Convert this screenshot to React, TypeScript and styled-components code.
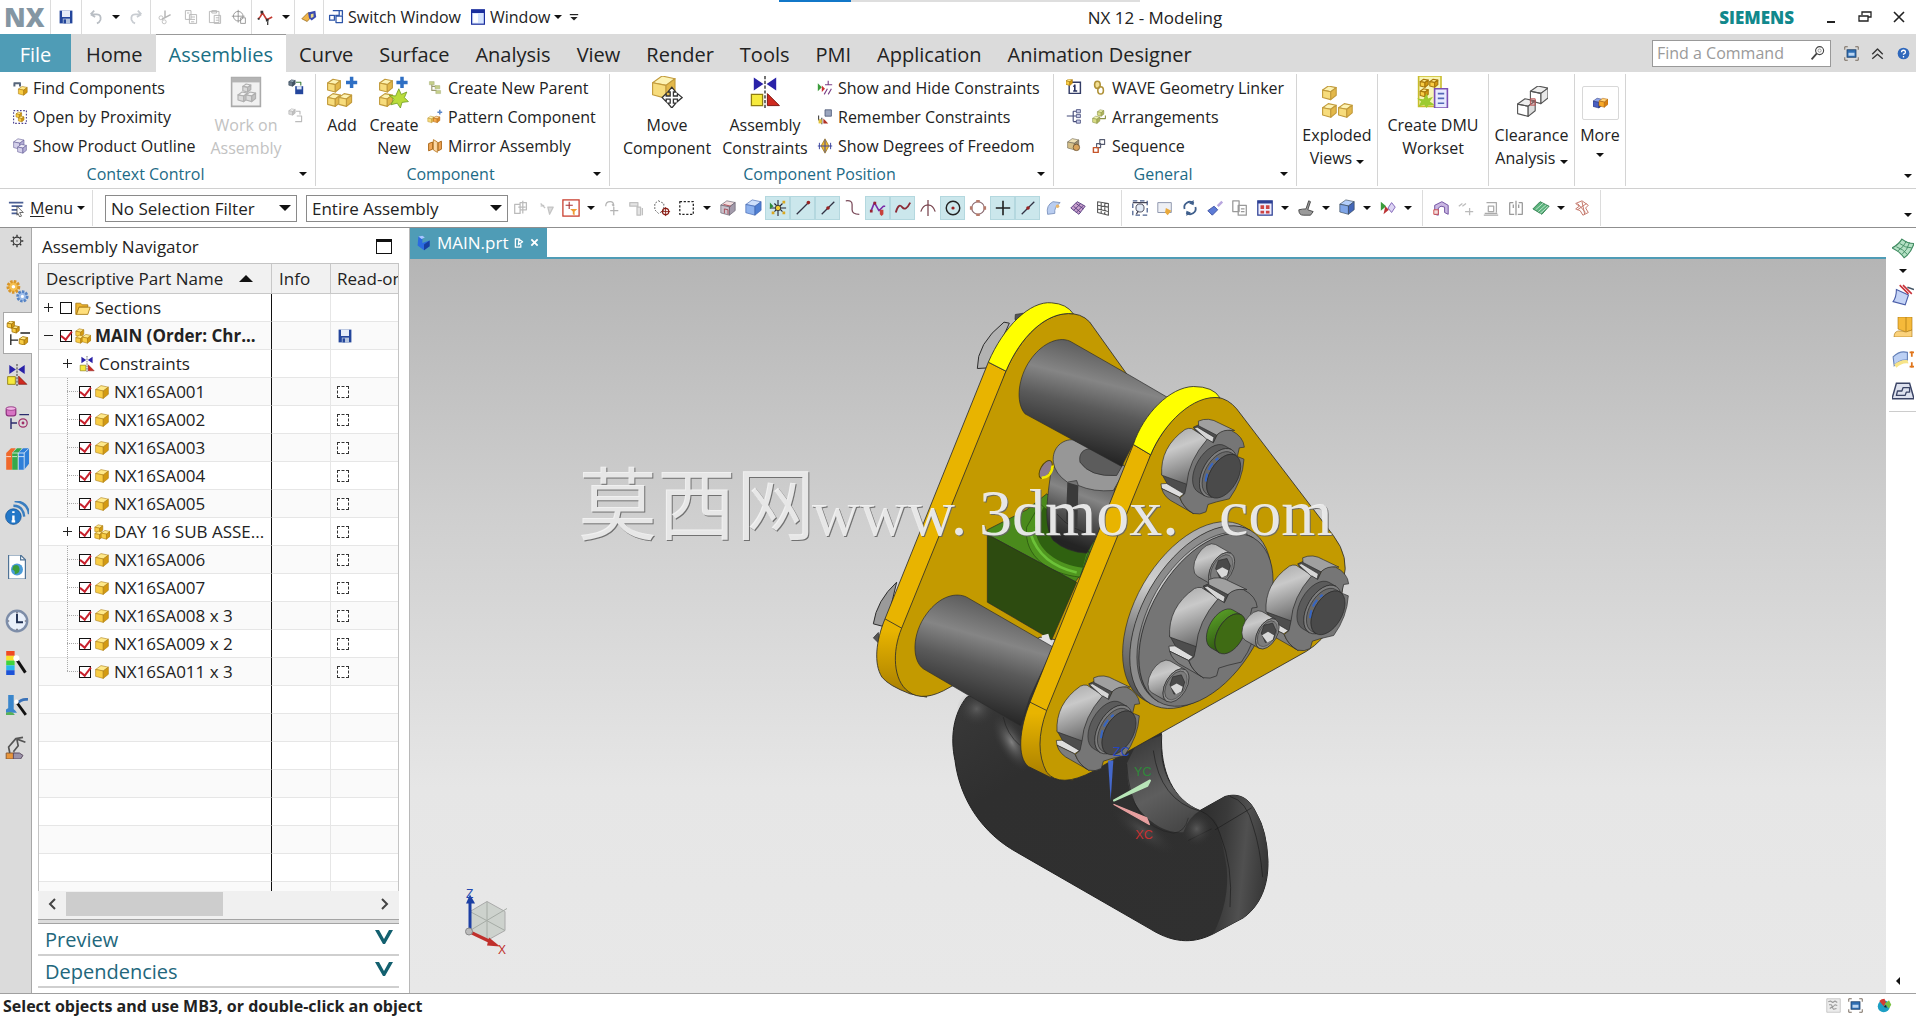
import React from "react";
import styled, { createGlobalStyle, css } from "styled-components";

const Global = createGlobalStyle`
  * { box-sizing: border-box; }
  body { margin: 0; background: #fff; overflow: hidden; }
  body, button, input, select { font-family: "Open Sans", "Noto Sans", "Noto Sans CJK SC", sans-serif; font-size: 16px; color: #222; }
  button { background: none; border: 0; padding: 0; cursor: default; white-space: nowrap; }
  svg { display: block; flex: none; }
`;

/* ---------- icon primitives ---------- */

type Tone = [string, string, string, string];
const GOLD: Tone = ["#ffe98a", "#f8cd45", "#d39a12", "#a8780c"];
const PALE: Tone = ["#fdf3b4", "#f7dc7c", "#e3b84a", "#c29b3c"];
const BLUE: Tone = ["#cfe0fb", "#8db2ee", "#4f7fd2", "#3c62ad"];
const NAVY: Tone = ["#8fa4e8", "#4a5fc0", "#2b3a94", "#222f78"];
const GREY: Tone = ["#f2f2f2", "#dadada", "#c2c2c2", "#b0b0b0"];
const STONE: Tone = ["#e6e2e2", "#bdb9c6", "#8d8798", "#5d5866"];

const Box = ({ x, y, s, t = GOLD }: { x: number; y: number; s: number; t?: Tone }) => {
  const p = (...n: number[]) => n.map((v, i) => (i % 2 ? y : x) + v * s).join(" ");
  return (
    <g stroke={t[3]} strokeWidth=".7" strokeLinejoin="round">
      <polygon points={p(0, 0.3, 0.42, 0, 1, 0.12, 0.6, 0.42)} fill={t[0]} />
      <polygon points={p(0, 0.3, 0.6, 0.42, 0.6, 1, 0, 0.84)} fill={t[1]} />
      <polygon points={p(0.6, 0.42, 1, 0.12, 1, 0.68, 0.6, 1)} fill={t[2]} />
    </g>
  );
};

const Line = ({ d, c = "#444", w = 1.4, f = "none", dash }: { d: string; c?: string; w?: number; f?: string; dash?: string }) => (
  <path d={d} stroke={c} strokeWidth={w} fill={f} strokeDasharray={dash} strokeLinejoin="round" />
);

const Plus = ({ x, y, s, c = "#2f6fc4" }: { x: number; y: number; s: number; c?: string }) => (
  <path d={`M${x} ${y - s}v${2 * s}M${x - s} ${y}h${2 * s}`} stroke={c} strokeWidth={s / 1.6} />
);

const Bowtie = () => (
  <>
    <path d="M3 1l6 4-6 4zM17 1l-6 4 6 4z" fill="#2a22a8" />
    <path d="M1.500 11.500h7v7h-7z" fill="#f6ea3c" stroke="#8f7d10" strokeWidth=".8" />
    <path d="M11.500 18.500v-7.500l7.500 7.500z" fill="#cf2a20" stroke="#7d1510" strokeWidth=".6" />
    <Line d="M10 0v20" c="#222" w={0.8} dash="2 1" />
  </>
);

const Monitor = () => (
  <>
    <rect x="4" y="5" width="12" height="10" fill="#2f6fb4" stroke="#1c3b63" />
    <rect x="6" y="9" width="8" height="4" fill="#bcd6f2" />
    <Line d="M1 5V1h4M15 1h4v4M19 15v4h-4M5 19H1v-4" c="#6b5d50" w={1.2} />
  </>
);

const ICONS: Record<string, React.ReactNode> = {
  save: (<><path d="M2 2h16v16H2z" fill="#24469c" /><path d="M5 2h10v8H5z" fill="#e6edf8" /><path d="M6 12h9v6H6z" fill="#b4c4de" /><path d="M7 13h3v5H7z" fill="#24469c" /></>),
  undo: <Line d="M4 7l4-4M4 7l5 3M4 7h7q5 0 4 6-1 3-4 4" c="#b9bec4" w={2} />,
  redo: <Line d="M16 7l-4-4M16 7l-5 3M16 7H9Q4 7 5 13q1 3 4 4" c="#c9cdd2" w={2} />,
  cut: (<><Line d="M10 2v9M17 7L6 13" c="#b5b5b5" w={1.800} /><circle cx="5" cy="11" r="2.500" stroke="#b5b5b5" fill="none" /><circle cx="9" cy="16" r="2.500" stroke="#b5b5b5" fill="none" /></>),
  copy: <Line d="M3 2h7v11H3zM8 7h9v11H8zM10 10h5M10 13h5M10 16h4M5 5h3" c="#b8b8b8" f="#fff" w={1.200} />,
  paste: <Line d="M3 3h12v14H3zM6 2h6v3H6zM9 8h8v10H9zM11 11h4M11 14h4" c="#b8b8b8" f="#fff" w={1.200} />,
  target: (<><circle cx="9" cy="9" r="6" stroke="#888" fill="none" /><Line d="M9 1v16M1 9h16M12 11h6v7h-6z" c="#888" w={1} /></>),
  route: (<><Line d="M2 12Q5 11 7 5l5 8 6-3" c="#c23b32" w={1.800} /><path d="M5 3h3v3H5zM11 12h3v3h-3zM2 11h2v2H2z" fill="#333" /><Line d="M13 15v4" c="#333" /></>),
  hand: (<><path d="M2 12l7-7 5 3-6 7z" fill="#f0b54a" stroke="#8f6419" strokeWidth=".8" /><path d="M9 5l8-2 1 7-5 4-3-3z" fill="#3a4bb0" /><path d="M12 7l3-1v4l-3 1z" fill="#e8d98a" /></>),
  windows: <Line d="M2 8h6v6H2zM6 2h8v6H9M10 9h8v8h-8zM14 2h4v6" c="#2d55a8" w={1.600} />,
  window: (<><rect x="2" y="1" width="16" height="18" fill="#d5e4ff" stroke="#1b2f9e" strokeWidth="1.500" /><path d="M2 1h16v4H2z" fill="#1b2f9e" /><path d="M4 6h6v11H4z" fill="#fff" /></>),
  overflow: (<><Line d="M3 6h14" c="#222" w={2} /><path d="M4 10h12l-6 6z" fill="#222" /></>),
  find: (<><Box x={8} y={8} s={11} /><Line d="M2 4h9M3 4v4M10 4v4" c="#56657a" w={2.500} /></>),
  proximity: (<><Line d="M2 2h16v16H2z" c="#4a3f8e" dash="2 2" /><Box x={5} y={4} s={7} /><Box x={8} y={9} s={7} /></>),
  outline: (<><Box x={2} y={1} s={13} t={["#eceaf6", "#d4d0ea", "#b4afd6", "#5b5490"]} /><Box x={7} y={8} s={11} t={["#eceaf6", "#d4d0ea", "#b4afd6", "#5b5490"]} /></>),
  workon: (<><path d="M1 1h18v18H1z" fill="#f1f1f1" stroke="#aaa" /><path d="M1 1h18v3H1z" fill="#b4b4b4" /><Box x={5} y={10} s={6} t={GREY} /><Box x={10} y={10} s={6} t={GREY} /><Box x={8} y={5} s={5} t={GREY} /></>),
  saveCtx: (<><path d="M9 9h10v10H9z" fill="#24469c" /><path d="M11 9h6v4h-6z" fill="#dfe8f8" /><Box x={1} y={1} s={8} t={["#9ab", "#678", "#456", "#345"]} /><Line d="M10 4h6v4" c="#3f7d3f" /></>),
  saveCtxOff: (<><Box x={1} y={1} s={8} t={GREY} /><Line d="M10 4h5v4M11 10h6v7H9" c="#bbb" /></>),
  add: (<><Box x={1} y={2} s={8} t={PALE} /><Box x={1} y={11} s={8} t={PALE} /><Box x={8} y={11} s={8} t={PALE} /><Plus x={16} y={4} s={3.500} /></>),
  create: (<><Box x={1} y={2} s={8} t={PALE} /><Box x={1} y={11} s={8} t={PALE} /><path d="M13 8l1.500 3.500L18 10l-1.500 3.500L19 16l-4 .5L14 20l-2-3-4 1 2-3.500L7 12l4 .5z" fill="#b9dc3c" stroke="#6f9a20" strokeWidth=".5" /><Plus x={15} y={4} s={3.500} /></>),
  parent: (<><Line d="M6 4v9h6M6 8h6" c="#9a9a70" /><path d="M3 2h6v4H3zM10 7h6v4h-6zM11 13h6v4h-6z" fill="#c5cf8a" stroke="#9aa468" strokeWidth=".5" /></>),
  pattern: (<><Box x={1} y={9} s={8} t={PALE} /><Box x={8} y={9} s={8} t={["#ffd9a0", "#f5a94d", "#d98422", "#b66a14"]} /><Plus x={16} y={4} s={3} c="#5a86c8" /></>),
  mirror: (<><path d="M8 2l5 3v13l-5-3z" fill="#fbd9a8" stroke="#b8741c" /><Line d="M2 7l5-2v9l-5 2zM14 6l4-2v10l-4 2z" c="#a86414" w={1.200} f="#f2a95a" /></>),
  move: (<><Box x={1} y={0} s={14} t={PALE} /><path d="M13 7l2.500 3h-1.500v2.500h2.500V11l3 2.500-3 2.500v-1.500H14V17h1.500L13 20l-2.500-3H12v-2.500H9.500V16L7 13.500 9.500 11v1.500H12V10h-1.500z" fill="#fff" stroke="#333" strokeWidth=".8" /></>),
  constraints: <Bowtie />,
  showhide: (<><path d="M1 4l5 5-5 5z" fill="#3b9c3b" /><path d="M6 7l4 4-4 4z" fill="#c33" /><Line d="M10 6h9M14 1v5M9 18l4-7M14 18l4-7" c="#7b3f86" /></>),
  remember: (<><path d="M10 1h8v8h-8z" fill="#9aa5bd" stroke="#4a5775" /><Line d="M2 8v6M2 14h4M6 11v8" c="#444" /><path d="M2 13h4v5H2z" fill="#e2c23a" /><path d="M8 18v-6l6 6z" fill="#b03024" /></>),
  dof: (<><path d="M10 1l5 9-5 9-5-9z" fill="#f0b92c" stroke="#8f6810" strokeWidth=".8" /><Line d="M1 10h18M10 2v16M3 6v8M17 6v8" c="#3c46a0" w={1.200} /></>),
  info: (<><path d="M4 4h14v14H4z" fill="#fff" stroke="#333c66" strokeWidth="1.800" /><Line d="M11 7v8M9 15h5M9 9h2" c="#26305e" w={2} /><Box x={0} y={0} s={8} t={GOLD} /></>),
  linker: (<><ellipse cx="8" cy="6" rx="3.500" ry="4.500" stroke="#b09238" strokeWidth="2" fill="#f3df92" /><ellipse cx="12" cy="13" rx="3.500" ry="4.500" stroke="#b09238" strokeWidth="2" fill="none" /></>),
  tree: (<><Line d="M1 10h8M9 4v13M9 4h4M9 10h4M9 17h4" c="#434a78" /><path d="M13 2h5v4h-5zM13 8h5v4h-5zM13 15h5v4h-5z" fill="#c8cce8" stroke="#434a78" /></>),
  arrange: (<><Box x={8} y={1} s={8} t={["#f1f3b0", "#d8dc84", "#aeb45a", "#8b9148"]} /><Box x={2} y={9} s={9} t={["#f1f3b0", "#d8dc84", "#aeb45a", "#8b9148"]} /><Line d="M11 12h7v-4" c="#8b9148" /></>),
  part: (<><Box x={2} y={2} s={14} t={["#efe1b6", "#d5bf88", "#9c8d70", "#66604e"]} /><circle cx="13" cy="13" r="4" fill="#d9a35a" stroke="#6a5030" /></>),
  sequence: (<><Line d="M11 2h6v6h-6z" c="#555b70" /><Line d="M7 7h5v5H7z" c="#555b70" /><Line d="M3 12h6v6H3z" c="#c6552a" w={1.800} /></>),
  exploded: (<><Box x={1} y={0} s={8.500} t={PALE} /><Box x={1} y={11} s={8.500} t={PALE} /><Box x={11} y={11} s={8.500} t={PALE} /></>),
  dmu: (<><path d="M1 0h14v19H1z" fill="#f8f5b6" stroke="#c9bd2e" /><Box x={2} y={2} s={5} /><Box x={8} y={2} s={5} /><Box x={2} y={8} s={5} /><path d="M11 8h8v12h-8z" fill="#e8eaff" stroke="#7a4fb4" /><Line d="M13 11h4M13 14h4M13 17h4" c="#5468b8" w={1} /><path d="M6 11l1 3 3-1-2 3 3 2-4 .5L6 20l-1.500-2L1 19l1.500-3L0 14l4 .5z" fill="#9ccb2f" /></>),
  clearance: (<><Box x={1} y={8} s={11} t={["#eee", "none", "#ddd", "#555"]} /><Box x={9} y={0} s={11} t={["#eee", "none", "#e9e9e9", "#555"]} /><path d="M9 8h3v4H9z" fill="#d2747455" stroke="#b55" strokeWidth=".6" /></>),
  more: (<><Box x={0} y={3} s={13} t={NAVY} /><Box x={8} y={3} s={12} t={["#ffd27a", "#f7a928", "#d97f10", "#b0650b"]} /></>),
  menu: (<><Line d="M1 4h16M4 8h12M4 12h8M4 16h6" c="#4b5f94" w={2} /><path d="M10 8l7 7h-4l2 4-2 1-2-4-1 2z" fill="#fff" stroke="#333" strokeWidth=".8" /></>),
  ghost1: <Line d="M3 6h6v10H3zM9 4h7v8H9zM7 9h8M12 2v14" c="#bbb" />,
  ghost2: <Line d="M4 5l5 5M4 8l4-1M12 9h6l-4 8z" c="#c4c4c4" f="#ddd" />,
  filter: (<><rect x="1" y="1" width="18" height="18" fill="#fff" stroke="#c83a2a" strokeWidth="1.400" /><path d="M4 7h8M8 3v8" stroke="#a33" strokeWidth="1.200" /><path d="M9 11h8l-3 3v4l-2-1v-3z" fill="#ef9b33" /></>),
  ghost3: <Line d="M3 8q0-5 5-5 4 0 4 5M12 8l-2-2M8 13h9M12 9v9" c="#b4b4b4" />,
  ghost4: <Line d="M2 4h9v4H2zM10 9h4v9h-4zM16 10v8" c="#c0c0c0" f="#e4e4e4" />,
  snapset: (<><path d="M6 2l6 3v8l-6 3-4-4V5z" stroke="#555" strokeDasharray="2 1.500" /><circle cx="14" cy="14" r="3.500" stroke="#8a1d14" strokeWidth="1.400" /><path d="M14 9v10M9 14h10" stroke="#8a1d14" /></>),
  marquee: <Line d="M2 3h15v14H2z" c="#222" dash="2.500 1.800" />,
  house: (<><Box x={2} y={2} s={16} t={["#f3dfe0", "#c9c2cc", "#a39bab", "#5d5866"]} /><Line d="M6 16v-5l4 1v5M5 6l8 2" c="#a8444f" w={1} /></>),
  shade: <Box x={2} y={1} s={17} t={BLUE} />,
  snap: (<><path d="M6 5l9 9M15 5l-9 9M10 1v18M1 10h18" stroke="#223" strokeWidth="1.200" /><circle cx="10" cy="10" r="3" fill="#f0c930" stroke="#333" /><path d="M1 4l4 4-4 3z" fill="#2d8a3c" /><path d="M15 2h3v3h-3zM15 14h3v3h-3zM3 14h3v3H3z" fill="#d9a820" /></>),
  endpt: (<><Line d="M3 17L17 3" c="#334" /><circle cx="16" cy="4" r="2" fill="#922" /></>),
  midpt: (<><Line d="M3 17L17 3" c="#334" /><circle cx="10" cy="10" r="2" fill="#922" /></>),
  tangent: <Line d="M2 2q7-1 7 4v6q0 5 8 5" c="#7a4a5a" />,
  spline: (<><Line d="M2 14L6 4l5 9 5-5 2 0" c="#7b2ba8" w={1.800} /><path d="M12 12h4v5l-2 2-2-2z" fill="#c8413a" /><path d="M1 12h3v3H1zM5 3h3v3H5z" fill="#923" /></>),
  curve: <Line d="M2 15Q5 4 9 9t9-5" c="#8c2a35" w={2} />,
  inter: <Line d="M10 1v18M2 14Q5 6 10 7q5-1 8 7" c="#7a4650" />,
  center: (<><circle cx="10" cy="10" r="7.500" stroke="#222" strokeWidth="1.600" /><circle cx="10" cy="10" r="1.800" fill="#922" /></>),
  quad: (<><circle cx="10" cy="10" r="7" stroke="#8a6a70" strokeWidth="1.200" /><path d="M8 1h4v3H8zM8 16h4v3H8zM1 8h3v4H1zM16 8h3v4h-3z" fill="#b67a6a" /></>),
  point: <Line d="M10 2v16M2 10h16" c="#222" w={1.800} />,
  onface: (<><path d="M4 17Q2 7 10 3l8 1q-7 5-6 12z" fill="#b9cdf0" stroke="#7d93bd" /><circle cx="15" cy="8" r="2" fill="#e8b56a" /></>),
  mesh: (<><path d="M2 10l7-7 9 5-7 9z" fill="#c9a0cc" stroke="#543b7e" /><Line d="M5 8l8 7M8 5l8 6M5 13l8-8M8 15l8-8" c="#543b7e" w={1} /></>),
  grid: <Line d="M4 3l12 2v13L4 15zM8 4v12M12 4v13M4 7l12 2M4 11l12 3" c="#555" w={1.200} />,
  fit: (<><Line d="M2 2h16v16H2z" c="#4a5f8c" dash="5 3" /><circle cx="10" cy="10" r="4.500" fill="#e3ebf6" stroke="#445" /><Line d="M2 4h16M6 17l2-4" c="#445" /></>),
  note: (<><path d="M2 4h15v11H2z" fill="#eef0f5" stroke="#8790a8" /><path d="M11 10l6 3-4 5-3-3z" fill="#e9a93c" /></>),
  rotate: (<><path d="M4 11a6 6 0 0 1 10-6M16 9a6 6 0 0 1-10 6" stroke="#3f5f8c" strokeWidth="2" /><path d="M14 1v6l-5-2zM6 19v-6l5 2z" fill="#3f5f8c" /></>),
  brush: (<><path d="M2 13l7-5 4 4-6 6z" fill="#5d7bd6" stroke="#3a4fa0" /><path d="M12 7l5-5 2 2-5 5z" fill="#b9a7df" /></>),
  pages: <Line d="M2 2h7v12H2zM8 7h9v11H8zM11 11h4M11 14h4" c="#999" />,
  layout: (<><path d="M2 2h16v16H2z" fill="#eef" stroke="#2c3f94" strokeWidth="1.400" /><path d="M2 2h16v3H2z" fill="#2c3f94" /><path d="M5 7h4v4H5zM11 7h4v4h-4zM5 13h4v3H5zM11 13h4v3h-4z" fill="#c44" /></>),
  section: (<><path d="M2 12q4-1 8-1l3-9 2 1-3 9 6 2-3 4H7q-5 0-5-6z" fill="#9a9a9a" stroke="#444" /></>),
  blue: <Box x={2} y={1} s={16} t={["#b4cffb", "#7fa6e8", "#4366b8", "#345"]} />,
  clip: (<><path d="M2 3l6 5-6 5z" fill="#3b9c3b" /><path d="M7 8l4 4-6 5z" fill="#b33" /><path d="M14 4l4 5-4 6-4-5z" fill="#dcd4f4" stroke="#7a5cb4" /></>),
  assy: (<><path d="M3 7l8-4 7 4v10l-4-2v-6l-4-1-3 2v8l-4-1z" fill="#c9b6e2" stroke="#69489c" /><path d="M2 12h5v5H2z" fill="#f2dede" stroke="#c44" /></>),
  ghost5: <Line d="M2 8l4-3M6 8l4-3M9 14h9M14 10v8" c="#bbb" />,
  ghost6: <Line d="M5 4h11v11M3 16h14M7 8h6v6H7zM2 18h16" c="#aaa" />,
  ghost7: <Line d="M3 4v13h5M17 4v13h-5M3 4h4M17 4h-4M10 2v16M7 6v4M13 6v4" c="#999" />,
  layers: (<><path d="M1 11l8-8 10 5-8 9z" fill="#5ab37c" stroke="#2c7a4b" /><Line d="M4 12l9-8M7 14l9-8M9 16l9-8" c="#e6f5ec" w={0.8} /></>),
  redmesh: <Line d="M3 5l7-3 7 5-3 3 3 5-6 3-3-5-5-2 4-3zM5 5l9 10M10 3l3 14M15 5L5 12" c="#c4776a" w={1.100} />,
  gear: (<><circle cx="10" cy="10" r="5.500" stroke="#333" strokeWidth="1.600" /><circle cx="10" cy="10" r="1" fill="#333" /><path d="M10 1v3M10 16v3M1 10h3M16 10h3M4 4l2 2M14 14l2 2M16 4l-2 2M6 14l-2 2" stroke="#333" strokeWidth="2" /></>),
  gears: (<><circle cx="7" cy="6.500" r="4.500" fill="#f5c050" stroke="#d8952a" strokeWidth="2.500" strokeDasharray="2 1" /><circle cx="7" cy="6.500" r="1.500" fill="#fff" /><circle cx="14.500" cy="14.500" r="4" fill="#9dbdea" stroke="#5784c4" strokeWidth="2.200" strokeDasharray="2 1" /><circle cx="14.500" cy="14.500" r="1.300" fill="#fff" /></>),
  nav: (<><Box x={1} y={0} s={6} /><Box x={5} y={4} s={6} /><Box x={11} y={13} s={7} /><Line d="M4 11v9M4 16h6M12 10h8" c="#222" w={1.100} /></>),
  partnav: (<><rect x="1" y="2" width="8" height="7" rx="2" fill="#d774c4" stroke="#8d2f7c" /><ellipse cx="5" cy="3" rx="4" ry="1.500" fill="#f2b6e6" stroke="#8d2f7c" strokeWidth=".6" /><circle cx="15" cy="15" r="3.500" stroke="#a0306a" /><circle cx="15" cy="15" r="1.200" fill="#a0306a" /><Line d="M5 11v9M5 15h5M12 8h8" c="#2c2c6e" w={1.200} /></>),
  books: (<><path d="M1 5l4-4h4L6 5v14H1z" fill="#f0692c" /><path d="M6 5l4-4h4l-3 4v14H6z" fill="#36a84b" /><path d="M11 5l4-4h5v13l-4 5h-5z" fill="#2f7fd8" /><path d="M11 5h5l4-4M16 5v14M6 5h5v14M1 8h4M6 8h4M11 8h5" stroke="#fff" strokeWidth=".6" /></>),
  feed: (<><circle cx="7" cy="13" r="6.500" fill="#2277c8" stroke="#14508f" strokeWidth=".6" /><path d="M7 12v5M5.500 17h3M7 8.500v1.500" stroke="#fff" strokeWidth="2" /><path d="M7 4q8 0 9 9M8 0q11 1 12 11" stroke="#3a7ec0" strokeWidth="2" /></>),
  web: (<><path d="M3 0h10l4 4v16H3z" fill="#fff" stroke="#4f7396" /><path d="M13 0v4h4" stroke="#4f7396" /><circle cx="10" cy="12" r="5" fill="#4a9bd8" /><path d="M7 9q4-2 5 2t-4 5q1-3-2-4z" fill="#3c9d3c" /></>),
  clock: (<><circle cx="10" cy="10" r="8.500" fill="#e9f0fa" stroke="#7d8da8" strokeWidth="2" /><path d="M10 4v7h5" stroke="#1f2f52" strokeWidth="1.600" /><path d="M10 2.500v1M10 16.500v1M2.500 10h1M16.500 10h1" stroke="#445" /></>),
  spectrum: (<><path d="M1 0h7v4H1z" fill="#f04a22" /><path d="M1 4h7v4H1z" fill="#f7e12c" /><path d="M1 8h7v4H1z" fill="#3fd43a" /><path d="M1 12h7v4H1z" fill="#27b8ec" /><path d="M1 16h7v4H1z" fill="#1c53d8" /><Line d="M9 6l8 12" c="#111" w={2.500} /><circle cx="9.500" cy="6" r="2.500" fill="#fff" /></>),
  scene: (<><path d="M2 1h5v13H2zM0 14q5-4 10 3H0z" fill="#3a86cc" /><path d="M0 17q6-2 8 2H0z" fill="#58b058" /><Line d="M10 9q4-5 10-4" c="#3a72b8" w={2.500} /><Line d="M10 8l8 11" c="#111" w={2.500} /><circle cx="9.500" cy="7" r="2" fill="#fff" /></>),
  robot: (<><path d="M1 15h7v5H1z" fill="#e8953a" stroke="#8b5a30" strokeWidth=".8" /><path d="M7 15h5l3 2-2 3H7z" fill="#9a92a8" stroke="#5b4a60" strokeWidth=".8" /><Line d="M4 15L3 10l6-7 6-1M9 3l8 3M7 14l4-5-1-5" c="#555" w={1.400} /></>),
  surface: (<><path d="M0 9Q6 6 9 1q5 4 11 4-3 9-9 13Q7 12 0 9z" fill="#b4e0c4" stroke="#3f8a60" /><Line d="M4 8q6 2 10 7M7 5q5 4 11 4M5 12q6-4 8-9M9 15q5-4 7-11" c="#3f8a60" w={0.8} /></>),
  trim: (<><path d="M4 5l11 5-3 9-11-3q3-4 3-11z" fill="#c5d4f6" stroke="#4a5ea8" /><Line d="M7 1l8 8M10 1l8 8" c="#c8323a" /><Line d="M14 3l6 2" c="#456" /></>),
  thick: (<><path d="M5 0h14v13l-6 2-8-3z" fill="#f5b93a" stroke="#a8740e" strokeWidth=".6" /><path d="M1 20q0-7 7-6l5 1 6-2v7z" fill="#fbd27c" stroke="#a8740e" strokeWidth=".6" /><Line d="M13 0v14" c="#a8740e" w={0.7} /></>),
  offset: (<><path d="M1 8Q7 2 14 4v7q-7-1-12 5z" fill="#bcd0f4" stroke="#6480b8" /><path d="M2 15q6-5 12-4l1 3q-6-1-11 4z" fill="#f7e488" /><path d="M18 3v5M18 13v5M16 4h4M16 17h4" stroke="#e0761c" strokeWidth="1.600" /></>),
  sketch: (<><path d="M4 3h12l4 14H0z" fill="#dde1ee" stroke="#3a4466" strokeWidth="1.300" /><Line d="M4 14l1-4h4l1-3h6v4h-3l-1 3z" c="#3a4466" w={1.200} /></>),
  monitor: <Monitor />,
  chevrons: <Line d="M3 11l7-7 7 7M3 17l7-6 7 6" c="#333" w={1.800} />,
  help: (<><circle cx="10" cy="10" r="9" fill="#2f68bc" /><path d="M7 8q0-3 3-3t3 3q0 2-3 3v1M10 14v2" stroke="#fff" strokeWidth="2" /></>),
  search: (<><circle cx="12" cy="7" r="5" stroke="#444" strokeWidth="1.400" /><circle cx="12" cy="7" r="2" stroke="#888" /><Line d="M8.500 10.500L2 18" c="#444" w={2.200} /></>),
  dither: (<><path d="M1 1h18v18H1z" fill="#ececec" stroke="#bbb" /><Line d="M3 5l3-1 3 2 3-2 3 2M4 9h3l2 3 3-3 3 1M5 14l3-2 2 3 4-1" c="#999" /></>),
  globe: (<><circle cx="9" cy="11" r="8" fill="#1d9fc4" /><path d="M9 11L3 4q3-3 7-3l2 5z" fill="#d23c32" /><path d="M10 8l6-5 3 6-3 5z" fill="#7ac142" /><path d="M9 12l3-3 1 4z" fill="#222" /></>),
  folder: (<><path d="M1 4h6l2 2h7v3H5l-3 9H1z" fill="#eeb52f" stroke="#a1720c" /><path d="M5 9h14l-3 9H2z" fill="#ffdf7c" stroke="#a1720c" /></>),
  asm: (<><Box x={1} y={1} s={10} /><Box x={1} y={9} s={10} /><Box x={9} y={8} s={11} /></>),
  cube: <Box x={2} y={2} s={16} />,
  doc: (<><path d="M3 2l5-1v9l9-3v7l-7 5-8-6z" fill="#2b6be0" /><path d="M3 2l5-1 3 2-4 2z" fill="#a8c6ff" /><path d="M10 12l7-5v7l-7 5z" fill="#173f9e" /></>),
  pin: <Line d="M11 3H4v14h9v-5M10 4l6 4-7 5z" c="#fff" w={2.2} />,
  close: <Line d="M3 3l14 14M17 3L3 17" c="#fff" w={4} />,
};

const Icon = ({ n, s = 18 }: { n: string; s?: number }) => (
  <svg width={s} height={s} viewBox="0 0 20 20" fill="none" aria-hidden="true">{ICONS[n]}</svg>
);

const Caret = styled.span<{ $w?: number }>`
  display: inline-block;
  flex: none;
  border: ${(p) => p.$w ?? 4}px solid transparent;
  border-top-color: #111;
  border-bottom: 0;
`;

/* ---------- frame ---------- */

const Page = styled.div`
  display: flex;
  flex-direction: column;
  height: 100vh;
  background: #fff;
`;

const Row = styled.div<{ $gap?: number }>`
  display: flex;
  align-items: center;
  gap: ${(p) => p.$gap ?? 0}px;
`;

const TitleBar = styled.header`
  display: grid;
  grid-template-columns: 779px 1fr auto;
  height: 34px;
`;

const QuickTools = styled(Row)`
  padding-left: 4px;
  height: 34px;
`;

const NX = styled.div`
  width: 46px;
  font-weight: 800;
  font-size: 26px;
  line-height: 32px;
  color: #8496a3;
`;

const Sep = styled.span<{ $h?: number }>`
  width: 1px;
  height: ${(p) => p.$h ?? 34}px;
  background: #dcdcdc;
  flex: none;
`;

const Tool = styled.button<{ $w?: number; $on?: boolean }>`
  display: flex;
  align-items: center;
  justify-content: center;
  flex: none;
  width: ${(p) => p.$w ?? 24}px;
  height: 26px;
  ${(p) => p.$on && css`
    width: 23px;
    height: 22px;
    margin: 0 1px;
    background: #cbe7ec;
    outline: 1px solid #b4d8df;
  `}
`;

const TextTool = styled.button`
  display: flex;
  align-items: center;
  gap: 4px;
  padding: 0 5px 0 4px;
`;

const TitleMid = styled.div`
  display: flex;
  flex-direction: column;
  width: 752px;
`;

const Progress = styled.div`
  width: 361px;
  height: 2px;
  background: linear-gradient(90deg, #1177c8 72px, #dedede 72px);
`;

const Title = styled.div`
  text-align: center;
  line-height: 32px;
  font-size: 17px;
`;

const Siemens = styled.div`
  font-weight: 800;
  font-size: 17px;
  color: #11888c;
  margin-right: 20px;
`;

const TabBar = styled.nav`
  display: flex;
  align-items: stretch;
  height: 38px;
  background: #dbdbdb;
`;

const Tab = styled.button<{ $kind?: "file" | "on" }>`
  padding: 2px 13px 0;
  font-size: 20px;
  ${(p) => p.$kind === "file" && css`
    width: 71px;
    margin-right: 2px;
    background: #4f9cb6;
    color: #fff;
  `}
  ${(p) => p.$kind === "on" && css`
    background: #fff;
    color: #1a6f85;
    border-top: 1px solid #999;
  `}
`;

const SearchBox = styled.label`
  display: flex;
  align-items: center;
  align-self: center;
  width: 179px;
  height: 27px;
  margin-left: auto;
  margin-right: 7px;
  padding: 0 4px;
  background: #fff;
  border: 1px solid #999;
  input {
    flex: 1;
    min-width: 0;
    border: 0;
    padding: 0;
    outline: 0;
  }
  input::placeholder { color: #9a9a9a; opacity: 1; }
`;

const Ribbon = styled.section`
  display: flex;
  height: 117px;
  padding-top: 2px;
  border-bottom: 1px solid #d0d0d0;
`;

const Group = styled.div<{ $w: number }>`
  display: flex;
  flex-direction: column;
  flex: none;
  width: ${(p) => p.$w}px;
  height: 112px;
  border-right: 1px solid #d4d4d4;
`;

const GroupBody = styled.div<{ $pad?: number; $gap?: number }>`
  display: flex;
  height: 90px;
  padding: 0 7px 0 ${(p) => p.$pad ?? 0}px;
  gap: ${(p) => p.$gap ?? 0}px;
`;

const GroupTitle = styled.div`
  display: grid;
  grid-template-columns: 1fr 24px;
  align-items: center;
  justify-items: center;
  line-height: 24px;
  color: #1d6a86;
`;

const List = styled.div`
  display: grid;
  grid-template-rows: repeat(3, 29px);
  align-content: start;
`;

const Item = styled.button`
  display: flex;
  align-items: center;
  gap: 5px;
  padding-bottom: 2px;
  text-align: left;
`;

const Big = styled.button<{ $w: number; $off?: boolean; $low?: boolean }>`
  display: flex;
  flex-direction: column;
  align-items: center;
  flex: none;
  width: ${(p) => p.$w}px;
  padding-top: ${(p) => (p.$low ? 12 : 2)}px;
  line-height: 23px;
  color: ${(p) => (p.$off ? "#c2c2c2" : "#222")};
  svg { margin-bottom: 6px; }
`;

const MoreBox = styled.span`
  display: flex;
  justify-content: center;
  align-items: center;
  width: 37px;
  height: 34px;
  margin-bottom: 4px;
  border: 1px solid #d8d8d8;
  border-radius: 2px;
  svg { margin: 0; }
  & ~ ${Caret} { margin-top: 6px; }
`;

const Spacer = styled.div`
  flex: 1;
`;

const BarEnd = styled.div`
  align-self: flex-end;
  display: flex;
  padding: 0 4px 10px;
`;

const SelectionBar = styled.div`
  display: flex;
  align-items: center;
  height: 39px;
  border-bottom: 1px solid #8f8f8f;
`;

const MenuButton = styled.button`
  display: flex;
  align-items: center;
  gap: 4px;
  width: 92px;
  padding-left: 8px;
  u { text-underline-offset: 2px; }
`;

const Drop = styled.label<{ $w: number }>`
  position: relative;
  display: flex;
  align-items: center;
  width: ${(p) => p.$w}px;
  margin-left: 9px;
  &:first-of-type { margin-left: 12px; }
  select {
    appearance: none;
    width: 100%;
    height: 27px;
    padding: 0 24px 0 5px;
    border: 1px solid #8a8a8a;
    border-radius: 0;
    background: #fff;
    outline: 0;
    font-size: 17px;
  }
  span { position: absolute; right: 6px; }
`;

const Main = styled.main`
  display: flex;
  flex: 1;
  min-height: 0;
`;

/* ---------- resource bar and navigator ---------- */

const ResourceBar = styled.aside`
  width: 32px;
  flex: none;
  background: #dbdbdb;
  border-right: 1px solid #a8a8a8;
`;

const ResBlock = styled.div<{ $top?: number }>`
  margin-top: ${(p) => p.$top ?? 0}px;
`;

const Res = styled.button<{ $h?: number; $on?: boolean }>`
  display: flex;
  align-items: center;
  justify-content: center;
  width: 32px;
  padding-left: 2px;
  height: ${(p) => p.$h ?? 42}px;
  ${(p) => p.$on && css`
    width: 29px;
    margin-left: 3px;
    padding: 0;
    background: #fff;
    border: 1px solid #a8a8a8;
    border-right: 0;
  `}
`;

const Navigator = styled.section`
  display: flex;
  flex-direction: column;
  width: 378px;
  flex: none;
  padding: 0 10px 5px 6px;
  border-right: 1px solid #b8b8b8;
`;

const NavTitle = styled.h2`
  display: flex;
  justify-content: space-between;
  align-items: center;
  height: 35px;
  margin: 0;
  padding: 2px 7px 0 4px;
  font-size: 17px;
  font-weight: 400;
`;

const WinGlyph = styled.span`
  width: 16px;
  height: 15px;
  border: 1px solid #111;
  border-top-width: 3px;
`;

const Grid = styled.div`
  flex: 1;
  min-height: 0;
  overflow: hidden;
  border: 1px solid #c4c4c4;
  border-bottom: 0;
`;

const Table = styled.table`
  table-layout: fixed;
  width: 100%;
  border-collapse: separate;
  border-spacing: 0;
  font-size: 17px;
  th {
    height: 30px;
    padding: 0 0 0 7px;
    overflow: hidden;
    white-space: nowrap;
    text-align: left;
    font-weight: 400;
    background: #f1f1f1;
    border-bottom: 1px solid #c8c8c8;
    border-right: 1px solid #c8c8c8;
  }
  th:last-child { padding-left: 6px; }
  td {
    height: 28px;
    padding: 0;
    overflow: hidden;
    white-space: nowrap;
    border-bottom: 1px solid #e6e6e6;
    border-right: 1px solid #e6e6e6;
  }
  td:first-child { border-right: 1px solid #111; }
  td:nth-child(3) { padding-left: 6px; }
  tbody tr:nth-child(even) td { background: #fafafa; }
  th:last-child, td:last-child { border-right: 0; }
`;

const SortHead = styled.span`
  display: flex;
  align-items: center;
  gap: 16px;
`;

const SortMark = styled.span`
  border: 7px solid transparent;
  border-bottom-color: #111;
  border-top: 0;
`;

const Node = styled.div<{ $bold?: boolean }>`
  display: flex;
  align-items: center;
  height: 27px;
  font-weight: ${(p) => (p.$bold ? 700 : 400)};
  label { padding-left: 4px; }
`;

const Guide = styled.span<{ $half?: boolean }>`
  align-self: ${(p) => (p.$half ? "flex-start" : "stretch")};
  flex: none;
  width: 12px;
  height: ${(p) => (p.$half ? "14px" : "auto")};
  margin-left: 28px;
  background:
    linear-gradient(90deg, #aaa 50%, transparent 50%) 0 13px / 2px 1px repeat-x,
    linear-gradient(#aaa 50%, transparent 50%) 0 0 / 1px 2px repeat-y;
`;

const Expander = styled.button<{ $ml: number }>`
  width: 11px;
  height: 14px;
  margin: 0 6px 0 ${(p) => p.$ml}px;
  flex: none;
  background:
    linear-gradient(#222, #222) center / 9px 1px no-repeat
    ${(p) => (p["aria-expanded"] ? "" : ", linear-gradient(#222, #222) center / 1px 9px no-repeat")};
`;

const Check = styled.input<{ $dotted?: boolean }>`
  appearance: none;
  flex: none;
  display: grid;
  place-items: center;
  width: 12px;
  height: 12px;
  margin: 0 3px 0 0;
  background: #fff;
  border: ${(p) => (p.$dotted ? "1px dashed #333" : "1px solid #111")};
  &:checked::after {
    content: "";
    width: 5px;
    height: 9px;
    margin-top: -3px;
    border: solid #c8202c;
    border-width: 0 2px 2px 0;
    transform: rotate(38deg);
  }
`;

const ScrollRow = styled.div`
  display: grid;
  grid-template-columns: 28px 157px 1fr 28px;
  height: 28px;
  padding-bottom: 2px;
  background: #f0f0f0;
  justify-items: center;
  align-items: center;
`;

const Thumb = styled.span`
  width: 100%;
  height: 24px;
  background: #cdcdcd;
`;

const Splitter = styled.div`
  height: 5px;
  background: #dcdcdc;
  border-top: 1px solid #a4a4a4;
  border-bottom: 1px solid #a4a4a4;
`;

const Fold = styled.button`
  display: flex;
  align-items: center;
  justify-content: space-between;
  height: 32px;
  flex: none;
  padding: 2px 6px 0 7px;
  font-size: 20px;
  line-height: 26px;
  color: #22677c;
  border-bottom: 2px solid #cfcfcf;
  svg { margin-bottom: 6px; }
`;

/* ---------- graphics area ---------- */

const Graphics = styled.section`
  display: flex;
  flex-direction: column;
  flex: 1;
  min-width: 0;
`;

const DocTabs = styled.div`
  display: flex;
  height: 31px;
  border-bottom: 2px solid #4f9cb6;
`;

const DocTab = styled.button`
  display: flex;
  align-items: center;
  gap: 5px;
  width: 137px;
  padding-left: 6px;
  font-size: 17px;
  background: #4f9cb6;
  color: #fff;
`;

const Canvas = styled.div`
  flex: 1;
  min-height: 0;
  background: linear-gradient(#b5b5b5, #cfcfcf 35%, #e6e6e6 72%, #e8e8e8);
  svg { width: 100%; height: 100%; }
`;

const SideTools = styled.aside`
  display: flex;
  flex-direction: column;
  align-items: center;
  width: 30px;
  flex: none;
  padding: 5px 0 8px 3px;
  button { display: flex; align-items: center; justify-content: center; height: 32px; flex: none; }
  button + ${Caret} { margin: 4px 0 6px; }
  hr { width: 100%; margin: 4px 0 0; border: 0; border-top: 1px solid #ccc; }
`;

const LeftMark = styled.span`
  align-self: flex-start;
  margin-left: 7px;
  border: 4px solid transparent;
  border-right-color: #111;
  border-left: 0;
`;

const StatusBar = styled.footer`
  display: flex;
  align-items: center;
  justify-content: space-between;
  height: 24px;
  padding: 0 24px 0 3px;
  border-top: 1px solid #a0a0a0;
  font-weight: 700;
`;

/* ---------- model drawing ---------- */

const C30 = 0.866;
const EDGE = "#2b2b2b";

/* A round part whose face lies in the plane of the front plate. */
const Disc = ({ x, y, r, len, face, side, w = 2 }: { x: number; y: number; r: number; len: number; face: string; side: string; w?: number }) => {
  const rx = r * 0.58;
  const dx = -len * C30;
  const dy = -len * 0.5;
  const [ax, ay, bx, by] = [x + r / 2, y - r * C30, x - r / 2, y + r * C30];
  return (
    <g stroke={EDGE} strokeWidth={w}>
      <path d={`M${ax} ${ay}L${ax + dx} ${ay + dy}A${rx} ${r} 30 0 0 ${bx + dx} ${by + dy}L${bx} ${by}A${rx} ${r} 30 0 1 ${ax} ${ay}Z`} fill={side} />
      <ellipse cx={x} cy={y} rx={rx} ry={r} transform={`rotate(30 ${x} ${y})`} fill={face} />
    </g>
  );
};

/* Castle nut with four slots; a stud or the green pin sits in it. */
const Nut = ({ x, y, green }: { x: number; y: number; green?: boolean }) => (
  <g transform={`translate(${x} ${y})${green ? " scale(1.06)" : ""}`} strokeLinejoin="round" stroke={EDGE} strokeWidth="2">
    <g transform="translate(-1057 -575)">
      <path d="M1000 440L1018 432L1072 458L1062 490L1030 490Z" fill="#4e4e4e" />
      <path d="M905 580L985 606L985 650L930 625Z" fill="#4e4e4e" />
      <path d="M975 447Q985 442 995 444L1042 474L1040 490Q985 545 982 612L905 584Q900 500 975 447Z" fill="url(#nutSide)" />
      <path d="M1002 442L1012 440L1062 470L1058 486L1042 478Z" fill="#d6d6d6" />
      <path d="M1015 422Q1045 408 1078 428L1124 450Q1092 446 1070 464L1016 436Z" fill="#a0a0a0" />
      <path d="M903 610L920 609L972 640L958 650L905 624Z" fill="#dedede" />
      <path d="M905 624L958 650Q972 685 1002 700L946 668Q912 652 905 624Z" fill="#7d7d7d" />
      <path d="M1042 476L1060 487L1072 462Q1090 446 1114 450Q1150 468 1153 500L1138 502L1132 528L1152 536Q1148 600 1108 655L1070 664L1044 672L1038 694Q1020 704 1000 699Q970 682 960 652L974 640L980 612Q985 540 1042 476Z" fill="#767676" />
    </g>
    {green ? (
      <Disc x={20} y={0} r={62} len={28} face="#3f6b14" side="url(#greenSide)" />
    ) : (
      <>
        <Disc x={18} y={2} r={80} len={24} face="#7d7d7d" side="#5b5b5b" />
        <Disc x={34} y={12} r={72} len={16} face="#4a4a4a" side="#696969" />
        <path d="M-20 28Q-16 -18 18 -42" stroke="#3565c4" strokeWidth="6" strokeDasharray="24 12" fill="none" />
      </>
    )}
  </g>
);

const Bolt = ({ x, y, r = 55 }: { x: number; y: number; r?: number }) => (
  <g>
    <Disc x={x} y={y} r={r} len={r * 0.95} face="#8b8b8b" side="url(#nutSide)" />
    <Disc x={x} y={y} r={r - 8} len={0} face="#7c7c7c" side="none" w={1} />
    <path d={`M${x - 18} ${y - 2}l8 -24l26 -6l10 22l-8 28l-24 8z`} fill="#4a4a4a" stroke={EDGE} strokeWidth="2" />
    <path d={`M${x - 16} ${y + 4}l18 -10l18 10l-4 14l-16 8z`} fill="#d8d8d8" />
  </g>
);

const Defs = () => (
  <defs>
    <linearGradient id="rod" x1=".62" y1=".1" x2=".38" y2=".9">
      <stop offset="0" stopColor="#5f5f5f" /><stop offset=".3" stopColor="#858585" /><stop offset=".55" stopColor="#5a5a5a" /><stop offset="1" stopColor="#242424" />
    </linearGradient>
    <linearGradient id="nutSide" x1="0.2" y1="0" x2=".5" y2="1">
      <stop offset="0" stopColor="#a9a9a9" /><stop offset=".35" stopColor="#c9c9c9" /><stop offset="1" stopColor="#6a6a6a" />
    </linearGradient>
    <linearGradient id="greenSide" x1="0" y1="0" x2=".4" y2="1">
      <stop offset="0" stopColor="#5faa2a" /><stop offset="1" stopColor="#2c5210" />
    </linearGradient>
    <linearGradient id="discSide" x1=".4" y1="0" x2=".3" y2="1">
      <stop offset="0" stopColor="#a8a8a8" /><stop offset=".35" stopColor="#d0d0d0" /><stop offset=".6" stopColor="#868686" /><stop offset="1" stopColor="#4c4c4c" />
    </linearGradient>
    <linearGradient id="hook" x1=".1" y1="0" x2=".9" y2="1">
      <stop offset="0" stopColor="#3a3a3a" /><stop offset=".3" stopColor="#2f2f2f" /><stop offset="1" stopColor="#303030" />
    </linearGradient>
    <linearGradient id="throat" x1=".2" y1="0" x2=".6" y2="1">
      <stop offset="0" stopColor="#3a3a3a" /><stop offset=".6" stopColor="#5e5e5e" /><stop offset="1" stopColor="#484848" />
    </linearGradient>
    <linearGradient id="tip" x1="0" y1=".3" x2="1" y2=".5">
      <stop offset="0" stopColor="#2e2e2e" /><stop offset=".35" stopColor="#3a3a3a" /><stop offset=".65" stopColor="#505050" /><stop offset="1" stopColor="#363636" />
    </linearGradient>
    <radialGradient id="glow"><stop offset="0" stopColor="#8a8a8a" stopOpacity=".9" /><stop offset="1" stopColor="#2f2f2f" stopOpacity="0" /></radialGradient>
    <linearGradient id="foot" x1="0" y1="0" x2="0" y2="1">
      <stop offset="0" stopColor="#e8b400" /><stop offset=".8" stopColor="#e8b400" /><stop offset="1" stopColor="#a57c00" />
    </linearGradient>
  </defs>
);

const Model = () => (
  <g transform="translate(860 280) scale(.33333)" strokeLinejoin="round">
    {/* hook */}
    <path d="M320 1250C280 1300 270 1370 285 1440C300 1560 370 1660 470 1715L870 1945C950 1995 1010 1985 1060 1960L1150 1912C1215 1865 1225 1790 1224 1740Q1220 1650 1190 1600C1165 1545 1130 1538 1095 1548L1020 1590C940 1560 900 1470 905 1365L880 1250L600 1150Z" fill="url(#hook)" stroke="#222" strokeWidth="3" />
    <ellipse cx="455" cy="1385" rx="45" ry="100" transform="rotate(-30 455 1385)" fill="url(#glow)" />
    <ellipse cx="350" cy="1285" rx="60" ry="55" fill="url(#glow)" opacity=".5" />
    <path d="M430 1310Q440 1360 480 1395" fill="none" stroke="#222" strokeWidth="2" />
    <path d="M905 1365C890 1480 950 1560 1020 1590Q985 1610 970 1655Q900 1660 840 1590Q800 1540 800 1450L830 1390Z" fill="url(#throat)" />
    <path d="M800 1450Q810 1640 940 1658Q975 1655 985 1612" fill="none" stroke="#222" strokeWidth="2" />
    <path d="M880 1410Q900 1560 1020 1592" fill="none" stroke="#1c1c1c" strokeWidth="2" />
    <ellipse cx="850" cy="1650" rx="120" ry="40" transform="rotate(35 850 1650)" fill="url(#glow)" opacity=".35" />
    <path d="M1020 1590L1095 1548C1130 1538 1165 1545 1190 1600Q1220 1650 1224 1740C1225 1790 1215 1865 1150 1912L1060 1960Q1110 1860 1100 1760Q1080 1640 1065 1620Q1045 1600 1020 1590Z" fill="url(#tip)" />
    <path d="M1020 1590Q1065 1610 1080 1660Q1120 1760 1110 1880M1065 1648L1175 1582M1110 1548Q1160 1560 1180 1640Q1200 1700 1208 1790M985 1680L1055 1645" fill="none" stroke="#1d1d1d" strokeWidth="2" />
    <ellipse cx="1010" cy="1645" rx="50" ry="55" fill="url(#glow)" opacity=".5" />

    {/* back nuts */}
    <path d="M432 125L448 128L388 262L352 264Q350 190 432 125Z" fill="#b2b2b2" stroke={EDGE} strokeWidth="3" />
    <path d="M465 116L466 102L490 98L470 122Z" fill="#555" stroke={EDGE} strokeWidth="2" />
    <path d="M110 905Q50 960 40 1030L78 1040Z" fill="#9a9a9a" stroke={EDGE} strokeWidth="3" />
    <path d="M40 1072L55 1056L58 1090Z" fill="#555" stroke={EDGE} strokeWidth="2" />

    {/* back plate */}
    <g stroke={EDGE} strokeWidth="2.5">
      <path d="M385 245L75 1015C48 1080 40 1150 66 1190Q85 1215 150 1240L200 1250L160 1100L438 272Z" fill="url(#foot)" />
      <path d="M438 272C480 170 560 90 640 100Q680 105 700 140L800 280L900 480L700 900L600 1080L540 1070L270 1220Q190 1268 145 1233C100 1200 95 1115 125 1043Z" fill="#c39a00" />
      <path d="M385 245C430 140 510 60 575 67Q620 70 640 100C560 90 480 170 438 272Z" fill="#ffff00" />
      <path d="M75 1015L125 1043" fill="none" />
    </g>

    {/* green block and spindle */}
    <path d="M382 748L500 688L560 640L740 780L645 905L382 762Z" fill="#4a8a1c" stroke={EDGE} strokeWidth="2" />
    <path d="M500 740C490 830 570 880 660 890L690 800L540 670Z" fill="#4f951f" stroke="#24480e" strokeWidth="2" />
    <path d="M525 740C530 810 590 850 668 862L690 780L550 680Z" fill="#2f6110" />
    <path d="M512 760Q540 850 650 876" fill="none" stroke="#6cc238" strokeWidth="8" />
    <path d="M382 762L650 905L575 1078L382 965Z" fill="#2d4b10" stroke={EDGE} strokeWidth="2" />
    <path d="M575 560C560 660 550 740 580 780Q620 815 680 818L760 680L770 560Z" fill="url(#rod)" stroke={EDGE} strokeWidth="2" />
    <path d="M580 770Q630 810 690 815M590 700Q630 750 710 765" fill="none" stroke="#222" strokeWidth="2" />
    <path d="M580 545C575 500 610 475 640 478L800 560L760 630Q700 635 655 615L650 600L622 605Q585 580 580 545Z" fill="#979797" stroke={EDGE} strokeWidth="2" />
    <path d="M660 545C655 520 670 505 690 505L790 550L770 585Q690 590 660 545Z" fill="#5c5c5c" stroke={EDGE} strokeWidth="2" />
    <path d="M622 605L655 615L652 740Q630 740 618 720Z" fill="#3a3a3a" />
    <ellipse cx="557" cy="567" rx="15" ry="30" transform="rotate(30 557 567)" fill="#8d7a8d" stroke="#554800" strokeWidth="3" />
    <path d="M545 592Q575 590 578 555" stroke="#f4e800" strokeWidth="8" fill="none" />
    <path d="M545 1065L565 1060L575 1095L545 1080Z" fill="#e3e3e3" />

    {/* spacer rods */}
    <path d="M630 182L810 285L930 355L850 430L785 558L495 400C465 365 475 290 510 240C540 195 590 165 630 182Z" fill="url(#rod)" stroke={EDGE} strokeWidth="2" />
    <path d="M320 950L580 1100L510 1250L482 1336L190 1165C155 1140 155 1060 200 1000C240 945 290 935 320 950Z" fill="url(#rod)" stroke={EDGE} strokeWidth="2" />

    {/* front plate */}
    <g stroke={EDGE} strokeWidth="2.5">
      <path d="M820 492L510 1265C478 1345 470 1430 505 1458L570 1490L640 1500L620 1300L872 523Z" fill="url(#foot)" />
      <path d="M872 523C910 430 1000 340 1070 350Q1105 355 1130 385L1420 765Q1470 830 1450 900Q1440 1050 1340 1112L830 1398L700 1472Q600 1525 560 1475Q520 1400 560 1290Z" fill="#c39a00" />
      <path d="M820 492C850 400 930 320 1000 318Q1060 318 1080 352C1000 340 910 430 872 523Z" fill="#ffff00" />
      <path d="M510 1265L560 1290" fill="none" />
    </g>

    {/* bearing cover with its screws and nuts */}
    <Disc x={1022} y={1010} r={300} len={26} face="#8c8c8c" side="url(#discSide)" />
    <Disc x={1038} y={1018} r={284} len={8} face="#757575" side="url(#discSide)" />
    <Bolt x={1085} y={866} />
    <Nut x={1090} y={1060} green />
    <Bolt x={948} y={1215} />
    <Nut x={1370} y={985} />
    <Bolt x={1222} y={1060} r={50} />
    <Nut x={1057} y={575} />
    <Nut x={743} y={1345} />

    {/* work coordinate system */}
    <path d="M744 1440L760 1440L752 1560Z" fill="#4468cc" />
    <path d="M762 1560L870 1500L862 1516Z" fill="#b8e6b8" stroke="#b8e6b8" strokeWidth="6" />
    <path d="M762 1572L868 1632L860 1612Z" fill="#e8a0a0" stroke="#e8a0a0" strokeWidth="4" />
    <g fontFamily="Liberation Sans, sans-serif" fontSize="38">
      <text x="758" y="1428" fill="#2346c0">ZC</text>
      <text x="822" y="1486" fill="#2e8a3a">YC</text>
      <text x="826" y="1676" fill="#c83030">XC</text>
    </g>
  </g>
);

const ViewTriad = () => (
  <g>
    <path d="M487 901L505 911V930L487 940L470 930V911Z" fill="#cdd2cd" stroke="#aaa" />
    <path d="M487 901V940M470 911L505 930M470 930L507 908" stroke="#a6aca6" fill="none" />
    <path d="M470 930V900" stroke="#1c3fa4" strokeWidth="3" />
    <path d="M466 903L470 894L475 903Z" fill="#1c3fa4" />
    <path d="M471 932L490 941" stroke="#c0302c" strokeWidth="3.5" />
    <path d="M489 937L500 946L487 945Z" fill="#c0302c" />
    <circle cx="469" cy="931" r="3.500" fill="#bbb" stroke="#888" />
    <g fontFamily="Liberation Sans, sans-serif" fontSize="12">
      <text x="466" y="897" fill="#2348b0">Z</text>
      <text x="498" y="953" fill="#c0302c">X</text>
    </g>
  </g>
);

const MarkLayer = styled.g`
  fill: #f4f4f4;
  fill-opacity: 0.9;
  filter: drop-shadow(1px 1px 0 #666);
`;

const Watermark = () => (
  <MarkLayer>
    <text x="578" y="533" fontSize="79" fontWeight="400" fontFamily="Noto Sans CJK SC, sans-serif">莫西网</text>
    <g fontSize="66" fontFamily="Liberation Serif, serif">
      <text x="812" y="534">www.</text>
      <text x="979" y="534">3dmox.</text>
      <text x="1219" y="534">com</text>
    </g>
  </MarkLayer>
);

/* ---------- data ---------- */

const TABS = ["Home", "Assemblies", "Curve", "Surface", "Analysis", "View", "Render", "Tools", "PMI", "Application", "Animation Designer"];

/* "+" marks a tool that is switched on, ">" a menu arrow, "|" a divider */
const SNAP_TOOLS = "ghost1 ghost2 filter > ghost3 ghost4 snapset marquee > house shade +snap +endpt +midpt tangent +spline +curve inter +center quad +point +midpt onface mesh grid | fit note rotate brush pages layout > section > blue > clip > | assy ghost5 ghost6 ghost7 layers > redmesh |".split(" ");

const PARTS: [string, boolean?][] = [
  ["NX16SA001"], ["NX16SA002"], ["NX16SA003"], ["NX16SA004"], ["NX16SA005"], ["DAY 16 SUB ASSE...", true],
  ["NX16SA006"], ["NX16SA007"], ["NX16SA008 x 3"], ["NX16SA009 x 2"], ["NX16SA011 x 3"],
];

const RibbonGroup = ({ w, title, pad, gap, children }: { w: number; title: string; pad?: number; gap?: number; children: React.ReactNode }) => (
  <Group $w={w}>
    <GroupBody $pad={pad} $gap={gap}>{children}</GroupBody>
    <GroupTitle><span>{title}</span><Caret /></GroupTitle>
  </Group>
);

const Items = ({ of }: { of: [string, string][] }) => (
  <List>{of.map(([n, t]) => <Item key={t}><Icon n={n} s={16} />{t}</Item>)}</List>
);

const IconList = ({ of }: { of: string[] }) => (
  <List>{of.map((n) => <Tool key={n} aria-label={n}><Icon n={n} s={16} /></Tool>)}</List>
);

const Bigs = styled.div<{ $end?: number }>`
  display: flex;
  margin-right: ${(p) => p.$end ?? 0}px;
`;

const Arrow = ({ w = 16 }: { w?: number }) => <Tool $w={w} aria-label="Options"><Caret /></Tool>;

export default function App() {
  return (
    <Page>
      <Global />
      <TitleBar>
        <QuickTools>
          <NX>NX</NX>
          <Sep /><Tool $w={30} aria-label="Save"><Icon n="save" s={16} /></Tool><Sep />
          <Tool $w={28} aria-label="Undo"><Icon n="undo" /></Tool><Arrow w={12} /><Tool $w={28} aria-label="Redo"><Icon n="redo" /></Tool><Sep />
          <Tool $w={28} aria-label="Cut"><Icon n="cut" s={16} /></Tool>
          <Tool aria-label="Copy"><Icon n="copy" s={16} /></Tool>
          <Tool aria-label="Paste"><Icon n="paste" s={16} /></Tool>
          <Tool aria-label="Locate"><Icon n="target" s={16} /></Tool><Sep />
          <Tool $w={26} aria-label="Route"><Icon n="route" /></Tool><Arrow /><Sep />
          <Tool $w={28} aria-label="Touch"><Icon n="hand" /></Tool><Sep />
          <TextTool><Icon n="windows" s={16} />Switch Window</TextTool>
          <TextTool><Icon n="window" s={16} />Window<Caret /></TextTool>
          <Tool $w={14} aria-label="Customize"><Icon n="overflow" s={12} /></Tool>
        </QuickTools>
        <TitleMid><Progress /><Title>NX 12 - Modeling</Title></TitleMid>
        <Row>
          <Siemens>SIEMENS</Siemens>
          <Tool $w={34} aria-label="Minimize"><svg width="14" height="14"><path d="M3 12h8" stroke="#222" strokeWidth="2" /></svg></Tool>
          <Tool $w={34} aria-label="Restore"><svg width="14" height="14" fill="none" stroke="#222"><path d="M4 5V2h9v5h-3M1 6h9v5H1z" strokeWidth="1.300" /></svg></Tool>
          <Tool $w={34} aria-label="Close"><svg width="14" height="14"><path d="M2 2l10 10M12 2L2 12" stroke="#222" strokeWidth="1.600" /></svg></Tool>
        </Row>
      </TitleBar>

      <TabBar>
        <Tab $kind="file">File</Tab>
        {TABS.map((t) => <Tab key={t} $kind={t === "Assemblies" ? "on" : undefined}>{t}</Tab>)}
        <SearchBox><input placeholder="Find a Command" aria-label="Find a Command" /><Icon n="search" s={16} /></SearchBox>
        <Row>
          <Tool $w={26} aria-label="Full screen"><Icon n="monitor" s={15} /></Tool>
          <Tool $w={26} aria-label="Minimize ribbon"><Icon n="chevrons" s={15} /></Tool>
          <Tool $w={26} aria-label="Help"><Icon n="help" s={13} /></Tool>
        </Row>
      </TabBar>

      <Ribbon>
        <RibbonGroup w={316} title="Context Control" pad={12}>
          <Items of={[["find", "Find Components"], ["proximity", "Open by Proximity"], ["outline", "Show Product Outline"]]} />
          <Spacer />
          <Big $w={76} $off><Icon n="workon" s={32} />Work on<span>Assembly</span></Big>
          <IconList of={["saveCtx", "saveCtxOff"]} />
        </RibbonGroup>
        <RibbonGroup w={294} title="Component">
          <Bigs $end={7}>
            <Big $w={52}><Icon n="add" s={32} />Add</Big>
            <Big $w={52}><Icon n="create" s={32} />Create<span>New</span></Big>
          </Bigs>
          <Items of={[["parent", "Create New Parent"], ["pattern", "Pattern Component"], ["mirror", "Mirror Assembly"]]} />
        </RibbonGroup>
        <RibbonGroup w={444} title="Component Position" pad={8}>
          <Bigs $end={3}>
            <Big $w={98}><Icon n="move" s={32} />Move<span>Component</span></Big>
            <Big $w={98}><Icon n="constraints" s={32} />Assembly<span>Constraints</span></Big>
          </Bigs>
          <Items of={[["showhide", "Show and Hide Constraints"], ["remember", "Remember Constraints"], ["dof", "Show Degrees of Freedom"]]} />
        </RibbonGroup>
        <RibbonGroup w={243} title="General" pad={8} gap={5}>
          <IconList of={["info", "tree", "part"]} />
          <Items of={[["linker", "WAVE Geometry Linker"], ["arrange", "Arrangements"], ["sequence", "Sequence"]]} />
        </RibbonGroup>
        <Group $w={81}><Big $w={80} $low><Icon n="exploded" s={32} />Exploded<span>Views <Caret /></span></Big></Group>
        <Group $w={111}><Big $w={110}><Icon n="dmu" s={32} />Create DMU<span>Workset</span></Big></Group>
        <Group $w={86}><Big $w={85} $low><Icon n="clearance" s={32} />Clearance<span>Analysis <Caret /></span></Big></Group>
        <Group $w={51}><Big $w={50} $low><MoreBox><Icon n="more" s={15} /></MoreBox>More<Caret /></Big></Group>
        <Spacer />
        <BarEnd><Caret /></BarEnd>
      </Ribbon>

      <SelectionBar>
        <MenuButton><Icon n="menu" /><span><u>M</u>enu</span><Caret /></MenuButton>
        <Sep $h={36} />
        <Drop $w={192}><select aria-label="Selection filter"><option>No Selection Filter</option></select><Caret $w={6} /></Drop>
        <Drop $w={202}><select aria-label="Selection scope"><option>Entire Assembly</option></select><Caret $w={6} /></Drop>
        <Row>
          {SNAP_TOOLS.map((t, i) => {
            if (t === ">") return <Arrow key={i} />;
            if (t === "|") return <Tool key={i} $w={12} as="span"><Sep $h={36} /></Tool>;
            const on = t[0] === "+";
            const n = on ? t.slice(1) : t;
            return <Tool key={i} $w={25} $on={on} aria-label={n}><Icon n={n} s={18} /></Tool>;
          })}
        </Row>
        <Spacer />
        <BarEnd><Caret /></BarEnd>
      </SelectionBar>

      <Main>
        <ResourceBar>
          <Res $h={26} aria-label="Resource bar options"><Icon n="gear" s={14} /></Res>
          <ResBlock $top={16}>
            <Res aria-label="Settings"><Icon n="gears" s={24} /></Res>
            <Res $on aria-label="Assembly Navigator"><Icon n="nav" s={24} /></Res>
            <Res aria-label="Constraint Navigator"><Icon n="constraints" s={22} /></Res>
            <Res aria-label="Part Navigator"><Icon n="partnav" s={24} /></Res>
            <Res aria-label="Reuse Library"><Icon n="books" s={24} /></Res>
          </ResBlock>
          <ResBlock $top={6}>
            <Res $h={54} aria-label="HD3D Tools"><Icon n="feed" s={24} /></Res>
            <Res $h={54} aria-label="Web Browser"><Icon n="web" s={24} /></Res>
          </ResBlock>
          <ResBlock $top={6}>
            <Res aria-label="History"><Icon n="clock" s={24} /></Res>
            <Res aria-label="Materials"><Icon n="spectrum" s={24} /></Res>
            <Res aria-label="Scenes"><Icon n="scene" s={22} /></Res>
            <Res aria-label="Roles"><Icon n="robot" s={24} /></Res>
          </ResBlock>
        </ResourceBar>

        <Navigator>
          <NavTitle>Assembly Navigator<WinGlyph /></NavTitle>
          <Grid>
            <Table>
              <colgroup><col width="233" /><col width="59" /><col /></colgroup>
              <thead>
                <tr><th><SortHead>Descriptive Part Name<SortMark /></SortHead></th><th>Info</th><th>Read-on</th></tr>
              </thead>
              <tbody>
                <tr>
                  <td><Node><Expander $ml={4} aria-label="Expand" aria-expanded={false} /><Check type="checkbox" id="sections" /><Icon n="folder" s={16} /><label htmlFor="sections">Sections</label></Node></td><td /><td />
                </tr>
                <tr>
                  <td><Node $bold><Expander $ml={4} aria-label="Collapse" aria-expanded /><Check type="checkbox" id="main" defaultChecked /><Icon n="asm" s={16} /><label htmlFor="main">MAIN (Order: Chr...</label></Node></td><td /><td><Icon n="save" s={16} /></td>
                </tr>
                <tr>
                  <td><Node><Expander $ml={23} aria-label="Expand" aria-expanded={false} /><Icon n="constraints" s={16} /><label>Constraints</label></Node></td><td /><td />
                </tr>
                {PARTS.map(([name, sub], i) => (
                  <tr key={name}>
                    <td>
                      <Node>
                        {sub ? <Expander $ml={23} aria-label="Expand" aria-expanded={false} /> : <Guide $half={i === PARTS.length - 1} />}
                        <Check type="checkbox" id={name} defaultChecked />
                        <Icon n={sub ? "asm" : "cube"} s={16} />
                        <label htmlFor={name}>{name}</label>
                      </Node>
                    </td>
                    <td />
                    <td><Check type="checkbox" $dotted aria-label={`${name} read-only`} /></td>
                  </tr>
                ))}
                {Array.from({ length: 30 }, (_, i) => <tr key={i}><td /><td /><td /></tr>)}
              </tbody>
            </Table>
          </Grid>
          <ScrollRow>
            <svg width="10" height="12" fill="none"><path d="M8 1L3 6l5 5" stroke="#444" strokeWidth="2" /></svg>
            <Thumb />
            <span />
            <svg width="10" height="12" fill="none"><path d="M2 1l5 5-5 5" stroke="#444" strokeWidth="2" /></svg>
          </ScrollRow>
          <Splitter />
          {["Preview", "Dependencies"].map((t) => (
            <Fold key={t}>{t}<svg width="18" height="15"><path d="M0 0h4l5 9 5-9h4l-8 14H8z" fill="#13606f" /></svg></Fold>
          ))}
        </Navigator>

        <Graphics>
          <DocTabs>
            <DocTab><Icon n="doc" s={16} />MAIN.prt<Icon n="pin" s={12} /><Icon n="close" s={9} /></DocTab>
          </DocTabs>
          <Canvas>
            <svg viewBox="410 259 1476 733" role="img" aria-label="Hook block assembly">
              <Defs />
              <Model />
              <ViewTriad />
              <Watermark />
            </svg>
          </Canvas>
        </Graphics>

        <SideTools>
          <button aria-label="Surface"><Icon n="surface" s={22} /></button>
          <Caret />
          <button aria-label="Trim"><Icon n="trim" s={22} /></button>
          <button aria-label="Thicken"><Icon n="thick" s={20} /></button>
          <button aria-label="Offset"><Icon n="offset" s={22} /></button>
          <button aria-label="Sketch"><Icon n="sketch" s={22} /></button>
          <hr />
          <Spacer />
          <LeftMark />
        </SideTools>
      </Main>

      <StatusBar>
        Select objects and use MB3, or double-click an object
        <Row $gap={7}><Icon n="dither" s={15} /><Icon n="monitor" s={15} /><Row /><Icon n="globe" s={15} /></Row>
      </StatusBar>
    </Page>
  );
}
